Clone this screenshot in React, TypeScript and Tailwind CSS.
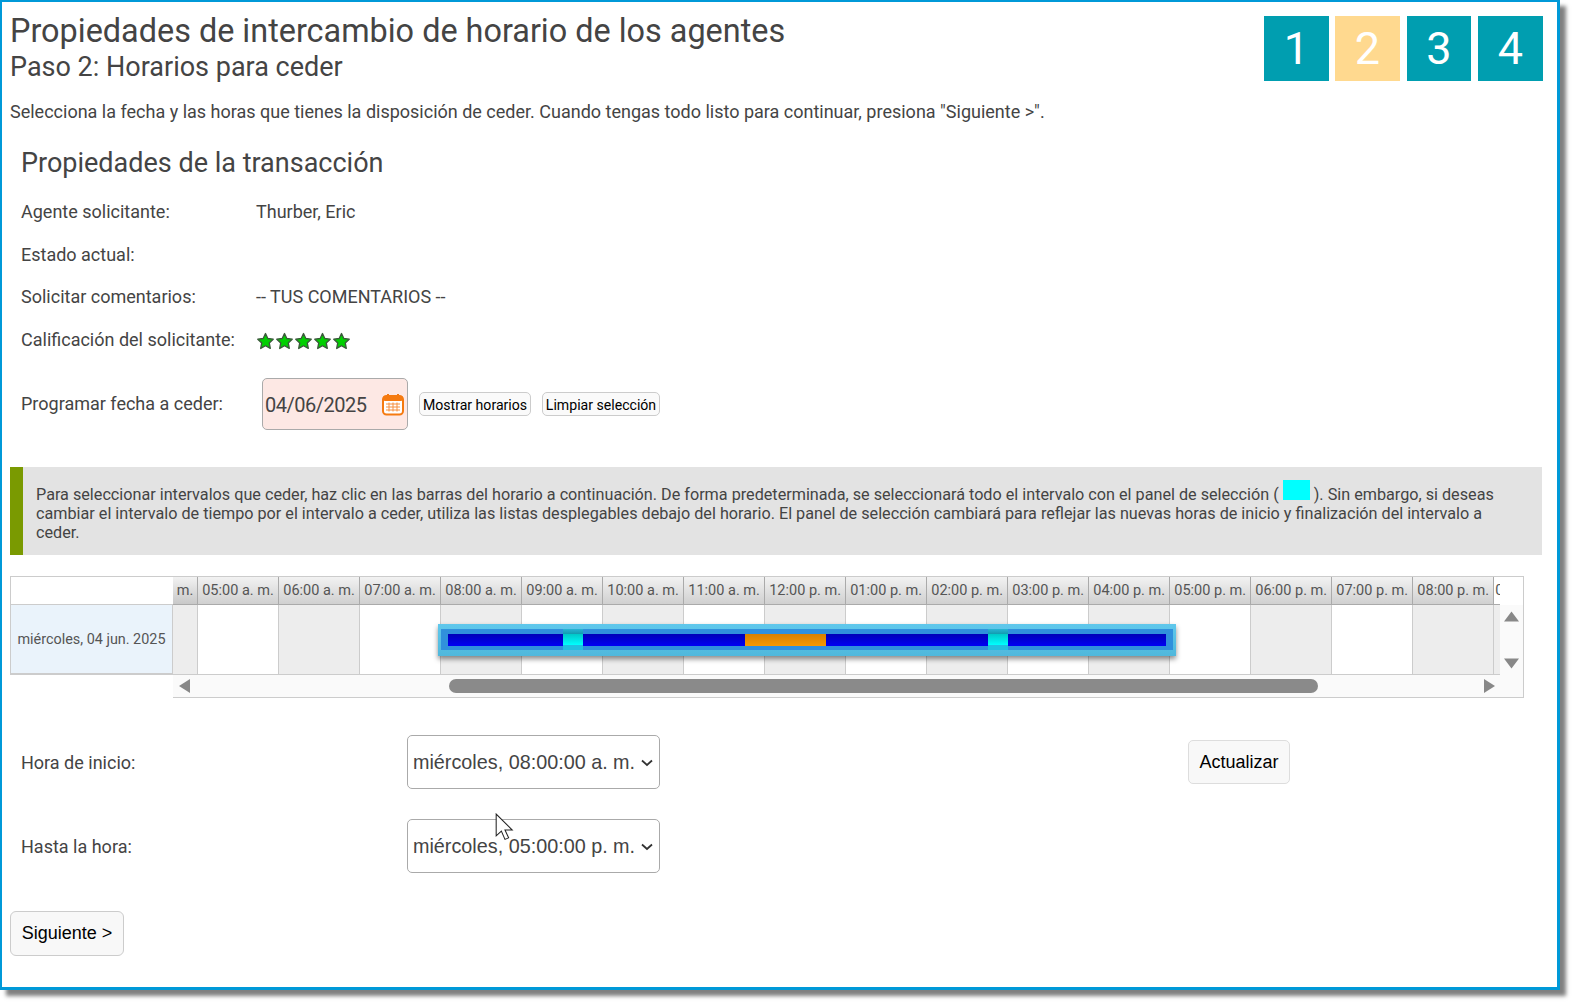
import React from "react";

const hours = ["05:00 a. m.","06:00 a. m.","07:00 a. m.","08:00 a. m.","09:00 a. m.","10:00 a. m.","11:00 a. m.","12:00 p. m.","01:00 p. m.","02:00 p. m.","03:00 p. m.","04:00 p. m.","05:00 p. m.","06:00 p. m.","07:00 p. m.","08:00 p. m."];

function Star() {
  return (
    <svg width="19" height="18" viewBox="0 0 24 24">
      <path d="M12 2l3.100 6.700 7.200.9-5.300 5 1.400 7.300L12 18.300l-6.400 3.600 1.400-7.300-5.300-5 7.200-.9z" fill="#00d000" stroke="#3a5a3a" strokeWidth="1.800" strokeLinejoin="round" />
    </svg>
  );
}

function Chevron() {
  return (
    <svg width="12" height="8" viewBox="0 0 12 8" className="shrink-0">
      <path d="M1 1.500l5 4.500 5-4.500" fill="none" stroke="#333" strokeWidth="1.800" />
    </svg>
  );
}

function Row({ label, children, className }: { label: string; children?: React.ReactNode; className?: string }) {
  return (
    <div className={"flex items-center text-[18px] text-[#444] " + (className ?? "")}>
      <div className="w-[235px]">{label}</div>
      <div>{children}</div>
    </div>
  );
}

function SelectRow({ label, value, className }: { label: string; value: string; className?: string }) {
  return (
    <div className={"flex items-center ml-[11px] " + (className ?? "")}>
      <div className="w-[386px] text-[18px] text-[#444]">{label}</div>
      <div className="w-[253px] h-[54px] border border-[#aaa] rounded-[5px] flex items-center justify-between pl-[5px] pr-[6px] pt-[1px] text-[19.800px] text-[#444] font-['Liberation_Sans',sans-serif]">
        <span className="whitespace-nowrap">{value}</span>
        <Chevron />
      </div>
    </div>
  );
}

function Band() {
  return (
    <div className="w-[20px] h-[21px] flex flex-col">
      <div className="h-[5px] bg-gradient-to-b from-[#28b4d4] to-[#109cb0]"></div>
      <div className="h-[11px] bg-gradient-to-b from-[#00c8c8] to-[#00ffff]"></div>
      <div className="h-[5px] bg-[#20c0e0]"></div>
    </div>
  );
}

export default function App() {
  return (
    <div className="w-[1573px] h-[1003px] bg-white font-['Roboto',sans-serif] overflow-hidden">
      <div className="relative w-[1560px] h-[990px] border-l-[2px] border-r-[3px] border-t-[2px] border-b-[3px] border-[#0099d8] bg-white shadow-[6px_6px_4px_rgba(0,0,0,0.5)] pl-[8px] flex flex-col">
        <div className="flex justify-between">
          <div className="pt-[11px]">
            <h1 className="text-[32.400px] leading-[36px] text-[#444] whitespace-nowrap">Propiedades de intercambio de horario de los agentes</h1>
            <h2 className="text-[27px] leading-[32px] mt-[2px] text-[#444]">Paso 2: Horarios para ceder</h2>
          </div>
          <div className="flex pt-[14px] pr-[14px] text-[45px] text-white">
            <div className="w-[65px] h-[65px] bg-[#009eb0] flex items-center justify-center">1</div>
            <div className="ml-[6px] w-[65px] h-[65px] bg-[#ffd98f] flex items-center justify-center">2</div>
            <div className="ml-[7px] w-[64px] h-[65px] bg-[#009eb0] flex items-center justify-center">3</div>
            <div className="ml-[7px] w-[65px] h-[65px] bg-[#009eb0] flex items-center justify-center">4</div>
          </div>
        </div>

        <p className="mt-[18px] text-[18px] leading-[22px] text-[#444]">Selecciona la fecha y las horas que tienes la disposición de ceder. Cuando tengas todo listo para continuar, presiona "Siguiente &gt;".</p>

        <div className="pl-[11px] mt-[23px]">
          <h3 className="text-[27px] leading-[34px] text-[#444]">Propiedades de la transacción</h3>
          <Row label="Agente solicitante:" className="mt-[20px] h-[22px]">Thurber, Eric</Row>
          <Row label="Estado actual:" className="mt-[21px] h-[22px]" />
          <Row label="Solicitar comentarios:" className="mt-[20px] h-[22px]">-- TUS COMENTARIOS --</Row>
          <Row label="Calificación del solicitante:" className="mt-[21px] h-[22px]">
            <div className="flex mt-[4px]">
              <Star /><Star /><Star /><Star /><Star />
            </div>
          </Row>
          <div className="flex items-center mt-[28px] text-[18px] text-[#444]">
            <div className="w-[241px] pb-[2px]">Programar fecha a ceder:</div>
            <div className="w-[146px] h-[52px] border border-[#aaa] rounded-[5px] bg-[#fde8e4] flex items-center justify-between pl-[2px] pr-[3px] text-[20px] tracking-[-0.5px]">
              <span className="pt-[1px]">04/06/2025</span>
              <svg width="22" height="23" viewBox="0 0 22 22">
                <rect x="1" y="2.500" width="20" height="18.500" rx="3.500" fill="#fff" stroke="#f57a10" strokeWidth="2" />
                <rect x="1" y="2.500" width="20" height="5" rx="2" fill="#f57a10" />
                <path d="M6 0.500v4M16 0.500v4" stroke="#f57a10" strokeWidth="2" />
                <path d="M4 10.500h14M4 13.500h14M4 16.500h14M7 9v9M11 9v9M15 9v9" stroke="#f59040" strokeWidth="1" />
              </svg>
            </div>
            <button className="ml-[11px] h-[24px] w-[112px] pt-[1px] border border-[#ccc] rounded-[5px] bg-[#fafafa] text-[14.100px] leading-[18px] text-black whitespace-nowrap">Mostrar horarios</button>
            <button className="ml-[11px] h-[24px] w-[118px] pt-[1px] border border-[#ccc] rounded-[5px] bg-[#fafafa] text-[14.100px] leading-[18px] text-black whitespace-nowrap">Limpiar selección</button>
          </div>
        </div>

        <div className="mt-[37px] w-[1532px] h-[88px] bg-[#e3e3e3] border-l-[13px] border-[#7a9a01] pl-[13px] pr-[40px] pt-[18px] text-[16.200px] leading-[19px] text-[#444]">
          Para seleccionar intervalos que ceder, haz clic en las barras del horario a continuación. De forma predeterminada, se seleccionará todo el intervalo con el panel de selección (<span className="inline-block w-[27px] h-[20px] -mt-[10px] bg-[#00ffff] mx-[4px]"></span>). Sin embargo, si deseas cambiar el intervalo de tiempo por el intervalo a ceder, utiliza las listas desplegables debajo del horario. El panel de selección cambiará para reflejar las nuevas horas de inicio y finalización del intervalo a ceder.
        </div>

        <div className="mt-[21px] w-[1514px] h-[122px] border-t border-r border-[#ccc] grid grid-cols-[163px_1327px_23px] grid-rows-[28px_70px_23px]">
          <div className="border-b border-l border-[#ccc]"></div>
          <div className="flex overflow-hidden border-b border-[#aaa]">
            <div className="w-[25px] shrink-0 bg-gradient-to-b from-[#f2f2f2] to-[#c8c8c8] border-r border-[#aaa] text-[14.500px] leading-[27px] text-[#555] text-center">m.</div>
            {hours.map((h) => (
              <div key={h} className="w-[81.030px] shrink-0 bg-gradient-to-b from-[#f2f2f2] to-[#d0d0d0] border-r border-[#aaa] text-[14.500px] leading-[27px] text-[#555] text-center whitespace-nowrap">{h}</div>
            ))}
            <div className="w-[6px] shrink-0 bg-white text-[14.500px] leading-[27px] text-[#555] overflow-hidden pl-[1px]">0</div>
          </div>
          <div></div>
          <div className="border-b-2 border-[#ccc] bg-[#eaf3fb] border-x border-x-[#ccc] pt-[2px] flex items-center justify-center text-[14.400px] text-[#555] whitespace-nowrap">miércoles, 04 jun. 2025</div>
          <div className="relative flex overflow-hidden border-b border-[#ccc]">
            <div className="w-[25px] shrink-0 bg-[#ededed] border-r border-[#ccc]"></div>
            {hours.map((h, i) => (
              <div key={h} className={"w-[81.030px] shrink-0 border-r border-[#ccc] " + (i % 2 === 1 ? "bg-[#ededed]" : "bg-white")}></div>
            ))}
            <div className="w-[6px] shrink-0 bg-[#ededed]"></div>
            <div className="absolute left-[265px] top-[19px] w-[738px] h-[32px] bg-gradient-to-b from-[#60c8ec] to-[#50b8dc] shadow-[0_3px_5px_rgba(0,0,0,0.45)] pt-[5px] px-[3px]">
              <div className="h-[21px] bg-[#3090dc] flex items-center px-[7px]">
                <div className="flex w-full h-[21px] items-center">
                  <div className="w-[115px] h-[12px] bg-gradient-to-b from-[#0000b8] to-[#0000f4]"></div>
                  <Band />
                  <div className="w-[162px] h-[12px] bg-gradient-to-b from-[#0000b8] to-[#0000f4]"></div>
                  <div className="w-[81px] h-[12px] bg-gradient-to-b from-[#d88000] to-[#f89800]"></div>
                  <div className="w-[162px] h-[12px] bg-gradient-to-b from-[#0000b8] to-[#0000f4]"></div>
                  <Band />
                  <div className="flex-1 h-[12px] bg-gradient-to-b from-[#0000b8] to-[#0000f4]"></div>
                </div>
              </div>
            </div>
          </div>
          <div className="flex flex-col items-center justify-between pt-[6px] pb-[6px] bg-[#fafafa]">
            <svg width="15" height="11" viewBox="0 0 15 11"><path d="M7.500 0.500L15 10.500H0z" fill="#888" /></svg>
            <svg width="15" height="11" viewBox="0 0 15 11"><path d="M0 0.500h15L7.500 10.500z" fill="#888" /></svg>
          </div>
          <div></div>
          <div className="bg-[#fafafa] border-b border-[#ccc] flex items-center pl-[6px] pr-[5px]">
            <svg width="11" height="14" viewBox="0 0 11 14"><path d="M11 0v14L0 7z" fill="#888" /></svg>
            <div className="ml-[259px] w-[869px] h-[14px] rounded-full bg-[#8a8a8a]"></div>
            <svg className="ml-auto" width="11" height="14" viewBox="0 0 11 14"><path d="M0 0v14l11-7z" fill="#888" /></svg>
          </div>
          <div className="bg-[#fafafa] border-b border-[#ccc]"></div>
        </div>

        <div className="relative">
          <SelectRow label="Hora de inicio:" value="miércoles, 08:00:00 a. m." className="mt-[37px]" />
          <button className="absolute left-[1178px] top-[42px] w-[102px] h-[44px] border border-[#ddd] rounded-[5px] bg-[#f8f8f8] text-[18px] text-black font-['Liberation_Sans',sans-serif]">Actualizar</button>
          <SelectRow label="Hasta la hora:" value="miércoles, 05:00:00 p. m." className="mt-[30px]" />
          <svg className="absolute left-[485px] top-[115px]" width="21" height="29" viewBox="0 0 20 28">
            <path d="M1 1v21l5-4.500 3.500 8 3.500-1.500-3.500-7.500 7 0z" fill="#fff" stroke="#222" strokeWidth="1" />
          </svg>
        </div>

        <button className="mt-[38px] w-[114px] h-[45px] border border-[#ccc] rounded-[6px] bg-[#f8f8f8] text-[18px] text-black font-['Liberation_Sans',sans-serif]">Siguiente &gt;</button>
      </div>
    </div>
  );
}
